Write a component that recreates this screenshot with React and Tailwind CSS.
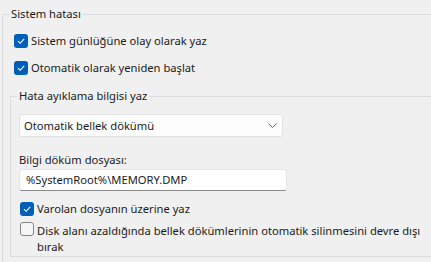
import React from "react";

function Box({ checked }) {
  if (checked) {
    return (
      <span className="w-[14px] h-[14px] shrink-0 rounded-[3px] bg-[#005fb8] flex items-center justify-center">
        <svg width="10" height="10" viewBox="0 0 10 10">
          <polyline points="2,5.2 4.2,7.3 8.2,2.8" fill="none" stroke="#ffffff" strokeWidth="1.1" />
        </svg>
      </span>
    );
  }
  return <span className="w-[14px] h-[14px] shrink-0 rounded-[3px] border border-[#858585] bg-[#f6f6f6]" />;
}

function Check({ checked, children, className }) {
  return (
    <label className={"flex items-center gap-[3px] " + (className || "")}>
      <Box checked={checked} />
      <span>{children}</span>
    </label>
  );
}

export default function App() {
  return (
    <div
      className="w-[431px] h-[262px] overflow-hidden bg-[#f0f0f0] text-[11.2px] leading-[16px] text-[#1b1b1b]"
      style={{ fontFamily: '"Noto Sans", sans-serif' }}
    >
      <fieldset className="ml-[2px] mt-[6px] w-[460px] h-[280px] border-l border-t border-[#dcdcdc]">
        <legend className="ml-[6px] px-[2px]">Sistem hatası</legend>

        <Check checked className="ml-[11px] mt-[11px]">Sistem günlüğüne olay olarak yaz</Check>
        <Check checked className="ml-[11px] mt-[11px]">Otomatik olarak yeniden başlat</Check>

        <fieldset className="ml-[7px] mt-[12px] w-[460px] h-[169px] border border-[#dcdcdc]">
          <legend className="ml-[6px] px-[2px]">Hata ayıklama bilgisi yaz</legend>

          <div className="ml-[8px] mt-[10px] w-[264px] h-[23px] bg-[#fdfdfd] border border-[#e3e3e3] rounded-[3px] flex items-center justify-between pl-[4px] pr-[5px]">
            <span>Otomatik bellek dökümü</span>
            <svg width="9" height="5" viewBox="0 0 9 5">
              <polyline points="0.5,0.5 4.5,4.5 8.5,0.5" fill="none" stroke="#606060" strokeWidth="1" />
            </svg>
          </div>

          <div className="ml-[8px] mt-[15px]">Bilgi döküm dosyası:</div>
          <div className="ml-[8px] mt-[1px] w-[268px] h-[22px] bg-[#ffffff] border border-[#e5e5e5] border-b-[#8a8a8a] rounded-[3px] flex items-center pl-[6px]">
            %SystemRoot%\MEMORY.DMP
          </div>

          <Check checked className="ml-[9px] mt-[10px]">Varolan dosyanın üzerine yaz</Check>
          <label className="ml-[9px] mt-[5px] flex items-start gap-[3px] w-[410px]">
            <Box />
            <span className="mt-[1px]">Disk alanı azaldığında bellek dökümlerinin otomatik silinmesini devre dışı bırak</span>
          </label>
        </fieldset>
      </fieldset>
    </div>
  );
}
